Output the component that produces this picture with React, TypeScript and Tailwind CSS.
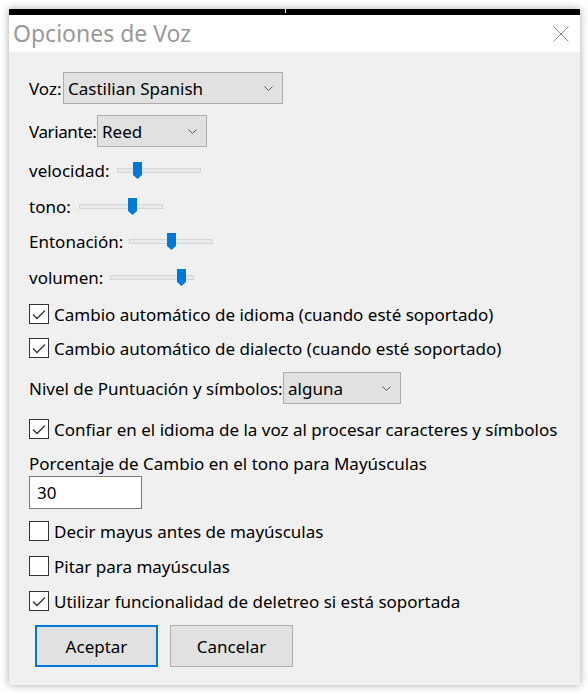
import React from 'react';

function Chevron() {
  return (
    <svg width="9" height="5" viewBox="0 0 9 5" className="block">
      <polyline points="0.5,0.5 4.5,4.5 8.5,0.5" fill="none" stroke="#5a5a5a" strokeWidth="1" />
    </svg>
  );
}

function Select({ value, w }: { value: string; w: string }) {
  return (
    <div className={`${w} h-[32px] bg-[#e1e1e1] border border-[#adadad] flex items-center justify-between pl-[4px] pr-[9px] shrink-0`}>
      <span>{value}</span>
      <Chevron />
    </div>
  );
}

function Slider({ label, labelW, pos }: { label: string; labelW: string; pos: number }) {
  return (
    <div className="h-[26px] flex items-center">
      <span className={`${labelW} shrink-0 whitespace-nowrap`}>{label}</span>
      <div className="relative w-[84px] h-[5px] bg-[#e7eaea] border border-[#d6d6d6]">
        <svg width="9" height="17" viewBox="0 0 9 17" className="absolute top-[-7px]" style={{ left: pos }}>
          <polygon points="0,0 9,0 9,13 4.5,17 0,13" fill="#0078d7" />
        </svg>
      </div>
    </div>
  );
}

function Check({ label, checked, className = '' }: { label: string; checked?: boolean; className?: string }) {
  return (
    <div className={`h-[26px] flex items-center ${className}`}>
      <div className="w-[20px] h-[20px] bg-white border border-[#333] shrink-0 flex items-center justify-center">
        {checked && (
          <svg width="14" height="11" viewBox="0 0 14 11">
            <polyline points="1,5.5 5,9.5 13,1.5" fill="none" stroke="#333" strokeWidth="1.3" />
          </svg>
        )}
      </div>
      <span className="ml-[5px] whitespace-nowrap">{label}</span>
    </div>
  );
}

export default function App() {
  return (
    <div className="w-[588px] h-[694px] bg-white pt-[9px] pl-[9px]" style={{ fontFamily: '"Noto Sans", "Open Sans", sans-serif' }}>
      <div className="w-[571px] h-[676px] flex flex-col shadow-[0_0_8px_rgba(0,0,0,0.35)]">
        {/* top strip */}
        <div className="h-[6px] bg-black flex">
          <div className="w-[276px]" />
          <div className="w-[1px] h-[4px] bg-white" />
        </div>

        {/* title bar */}
        <div className="h-[37px] bg-white flex items-center justify-between pl-[4px] pr-[11px]">
          <span className="text-[23px] text-[#9a9a9a] leading-none">Opciones de Voz</span>
          <svg width="16" height="16" viewBox="0 0 16 16">
            <line x1="0.5" y1="0.5" x2="15.5" y2="15.5" stroke="#8a8a8a" strokeWidth="1" />
            <line x1="15.5" y1="0.5" x2="0.5" y2="15.5" stroke="#8a8a8a" strokeWidth="1" />
          </svg>
        </div>

        {/* body */}
        <div className="flex-1 bg-[#f0f0f0] pl-[20px] pt-[20px] text-[17px] text-black leading-none">
          <div className="h-[32px] flex items-center">
            <span className="w-[34px] shrink-0">Voz:</span>
            <Select value="Castilian Spanish" w="w-[220px]" />
          </div>
          <div className="h-[32px] flex items-center mt-[11px]">
            <span className="w-[68px] shrink-0 whitespace-nowrap tracking-[-0.4px]">Variante:</span>
            <Select value="Reed" w="w-[110px]" />
          </div>

          <div className="mt-[10px]">
            <Slider label="velocidad:" labelW="w-[88px]" pos={15} />
          </div>
          <div className="mt-[10px]">
            <Slider label="tono:" labelW="w-[50px]" pos={48} />
          </div>
          <div className="mt-[9px]">
            <Slider label="Entonación:" labelW="w-[100px]" pos={37} />
          </div>
          <div className="mt-[10px]">
            <Slider label="volumen:" labelW="w-[81px]" pos={66} />
          </div>

          <Check className="mt-[11px]" checked label="Cambio automático de idioma (cuando esté soportado)" />
          <Check className="mt-[8px]" checked label="Cambio automático de dialecto (cuando esté soportado)" />

          <div className="h-[32px] flex items-center mt-[11px]">
            <span className="w-[254px] shrink-0 whitespace-nowrap">Nivel de Puntuación y símbolos:</span>
            <Select value="alguna" w="w-[118px]" />
          </div>

          <Check className="mt-[12px]" checked label="Confiar en el idioma de la voz al procesar caracteres y símbolos" />

          <div className="h-[26px] flex items-center mt-[8px] whitespace-nowrap">Porcentaje de Cambio en el tono para Mayúsculas</div>
          <div className="w-[113px] h-[33px] bg-white border border-[#7a7a7a] flex items-center pl-[7px]">30</div>

          <Check className="mt-[9px]" label="Decir mayus antes de mayúsculas" />
          <Check className="mt-[9px]" label="Pitar para mayúsculas" />
          <Check className="mt-[9px]" checked label="Utilizar funcionalidad de deletreo si está soportada" />

          <div className="flex gap-[12px] mt-[11px] pl-[6px]">
            <button className="w-[123px] h-[42px] bg-[#e1e1e1] border-2 border-[#0078d7] flex items-center justify-center">Aceptar</button>
            <button className="w-[123px] h-[42px] bg-[#e1e1e1] border border-[#adadad] flex items-center justify-center">Cancelar</button>
          </div>
        </div>
      </div>
    </div>
  );
}
